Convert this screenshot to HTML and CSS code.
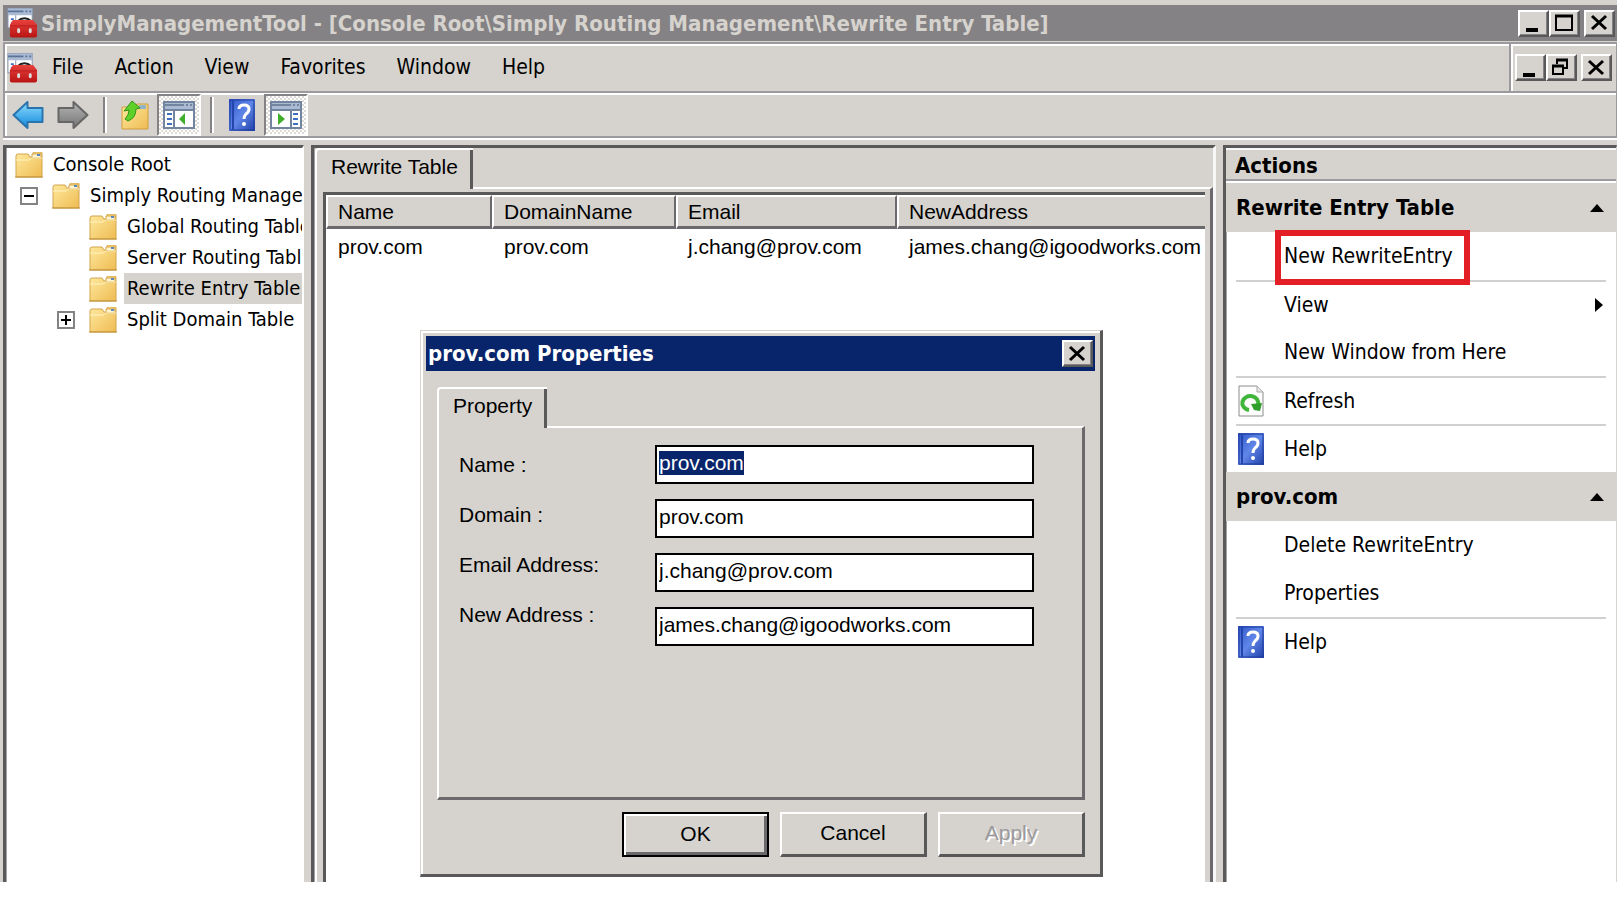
FILE: index.html
```html
<!DOCTYPE html>
<html lang="en">
<head>
    <meta charset="UTF-8">
    <meta name="viewport" content="width=device-width, initial-scale=1.0">
    <title>SimplyManagementTool</title>
    <link rel="stylesheet" href="styles.css">
</head>
<body>
    <!-- Shared icons -->
    <svg class="icon-defs" aria-hidden="true">
        <defs>
            <linearGradient id="folderFill" x1="0" y1="0" x2="1" y2="1">
                <stop offset="0" stop-color="#ffeaa0"/>
                <stop offset="1" stop-color="#eebb52"/>
            </linearGradient>
            <linearGradient id="blueFill" x1="0" y1="0" x2="0" y2="1">
                <stop offset="0" stop-color="#8fe0ff"/>
                <stop offset="1" stop-color="#0f86dc"/>
            </linearGradient>
            <linearGradient id="greyFill" x1="0" y1="0" x2="0" y2="1">
                <stop offset="0" stop-color="#b5b5b5"/>
                <stop offset="1" stop-color="#757575"/>
            </linearGradient>
            <linearGradient id="helpFill" x1="0" y1="0" x2="1" y2="1">
                <stop offset="0" stop-color="#2f55c8"/>
                <stop offset="0.5" stop-color="#5f86e8"/>
                <stop offset="1" stop-color="#1f3fa8"/>
            </linearGradient>
            <linearGradient id="redFill" x1="0" y1="0" x2="0" y2="1">
                <stop offset="0" stop-color="#e8413c"/>
                <stop offset="1" stop-color="#b81414"/>
            </linearGradient>
        </defs>
        <symbol id="toolbox" viewBox="0 0 32 32">
            <rect x="1" y="1" width="25" height="20" fill="#fff" stroke="#8395b0"/>
            <rect x="1" y="1" width="25" height="7" fill="#a9bad2"/>
            <path d="M1 4h16M19 4h2M23 4h2" stroke="#5c7398" stroke-width="2"/>
            <path d="M4 12h3M4 16h3" stroke="#3e6fc4" stroke-width="2"/>
            <path d="M9 8v10" stroke="#8395b0"/>
            <path d="M11 14q3-3 7-3t7 3" fill="none" stroke="#222" stroke-width="2"/>
            <path d="M3 18l3-5h21l4 5v11q0 2-2 2H5q-2 0-2-2z" fill="url(#redFill)"/>
            <path d="M3 19h28" stroke="#b81c1c"/>
            <path d="M12 23v2M24 23v2" stroke="#ddd" stroke-width="3" stroke-linecap="round"/>
        </symbol>
        <symbol id="folder" viewBox="0 0 28 26">
            <path d="M1 4q0-2 2-2h10l2 3h3V1q0-1 1-1h7q1 0 1 1v24H1z" fill="url(#folderFill)" stroke="#d3a44a"/>
            <path d="M17 2h9v4h-9z" fill="#fff6cf" stroke="#d3a44a"/>
            <path d="M22 3h3" stroke="#5b87c0" stroke-width="2"/>
            <path d="M1 8h13l3-2h10" fill="none" stroke="#fff3c0"/>
            <path d="M0 25h28" stroke="#bf8f38"/>
        </symbol>
        <symbol id="back" viewBox="0 0 32 28">
            <path d="M1 14L15 1v6h15v14H15v6z" fill="url(#blueFill)" stroke="#2a74ad" stroke-width="2" stroke-linejoin="round"/>
        </symbol>
        <symbol id="forward" viewBox="0 0 32 28">
            <path d="M31 14L17 1v6H2v14h15v6z" fill="url(#greyFill)" stroke="#666" stroke-width="2" stroke-linejoin="round"/>
        </symbol>
        <symbol id="up" viewBox="0 0 28 30">
            <path d="M1 7h12l3-3h11v25H1z" fill="url(#folderFill)" stroke="#cf9d3c"/>
            <path d="M18 5h7v4h-7z" fill="#8fb4c8"/>
            <path d="M11 1l8 7-4 1q0 9-8 12l-3-2q4-4 4-9l-5 1z" fill="#5fd02a" stroke="#2f9414"/>
        </symbol>
        <symbol id="treeview" viewBox="0 0 32 28">
            <rect x="1" y="1" width="30" height="26" fill="#fff" stroke="#72849f" stroke-width="2"/>
            <path d="M2 5h28" stroke="#a9bad2" stroke-width="6"/>
            <path d="M2 4h19M23 4h2M27 4h2M1 9h30" stroke="#72849f" stroke-width="2"/>
            <path d="M11 9v18" stroke="#72849f" stroke-width="2"/>
            <path d="M4 13h5M4 18h5M4 23h5" stroke="#3e6fc4" stroke-width="2"/>
            <path d="M22 12v12l-6-6z" fill="#3fae2a"/>
        </symbol>
        <symbol id="actionview" viewBox="0 0 32 28">
            <rect x="1" y="1" width="30" height="26" fill="#fff" stroke="#72849f" stroke-width="2"/>
            <path d="M2 5h28" stroke="#a9bad2" stroke-width="6"/>
            <path d="M2 4h19M23 4h2M27 4h2M1 9h30" stroke="#72849f" stroke-width="2"/>
            <path d="M21 9v18" stroke="#72849f" stroke-width="2"/>
            <path d="M23 13h5M23 18h5M23 23h5" stroke="#3e6fc4" stroke-width="2"/>
            <path d="M8 12v12l7-6z" fill="#3fae2a"/>
        </symbol>
        <symbol id="help" viewBox="0 0 26 32">
            <rect x="0" y="0" width="26" height="32" fill="url(#helpFill)"/>
            <path d="M1 1v30h24V1z" fill="none" stroke="#1f3d9c" stroke-width="1"/>
            <path d="M4 1v30" stroke="#2445ab" stroke-width="2"/>
            <path d="M10 10q0-4 5-4 5 0 5 4 0 3-3 5-2 2-2 5" fill="none" stroke="#fff" stroke-width="3"/>
            <circle cx="15" cy="25" r="2" fill="#fff"/>
        </symbol>
        <symbol id="refresh" viewBox="0 0 26 32">
            <path d="M1 1h18l6 6v24H1z" fill="#fcfcfc" stroke="#8c8c8c"/>
            <path d="M19 1v6h6" fill="#e6e6e6" stroke="#a8a8a8"/>
            <path d="M11 25a8 7 0 1 1 9-5" fill="none" stroke="#3fb53a" stroke-width="4"/>
            <path d="M13 19l11-1-2 8-6-1z" fill="#2f9e2c"/>
        </symbol>
        <symbol id="min" viewBox="0 0 26 22"><path d="M6 18h12" stroke="#000" stroke-width="4"/></symbol>
        <symbol id="max" viewBox="0 0 26 22"><path d="M5 4h16v14H5z" fill="none" stroke="#000" stroke-width="2"/><path d="M4 4h18" stroke="#000" stroke-width="3"/></symbol>
        <symbol id="restore" viewBox="0 0 26 22">
            <path d="M9 7V3h10v8h-4" fill="none" stroke="#000" stroke-width="2"/><path d="M8 3h12M4 9h12" stroke="#000" stroke-width="3"/>
            <path d="M5 9h10v8H5z" fill="none" stroke="#000" stroke-width="2"/>
        </symbol>
        <symbol id="close" viewBox="0 0 26 22"><path d="M6 4l14 13M20 4L6 17" stroke="#000" stroke-width="3"/></symbol>
    </svg>

    <div class="window">
        <header class="title-bar">
            <svg class="app-icon"><use href="#toolbox"/></svg>
            <h1>SimplyManagementTool - [Console Root\Simply Routing Management\Rewrite Entry Table]</h1>
            <div class="window-buttons">
                <button class="box-button" aria-label="Minimize"><svg><use href="#min"/></svg></button>
                <button class="box-button" aria-label="Maximize"><svg><use href="#max"/></svg></button>
                <button class="box-button close" aria-label="Close"><svg><use href="#close"/></svg></button>
            </div>
        </header>

        <div class="menu-bar">
            <svg class="app-icon"><use href="#toolbox"/></svg>
            <nav class="menu">
                <button>File</button>
                <button>Action</button>
                <button>View</button>
                <button>Favorites</button>
                <button>Window</button>
                <button>Help</button>
            </nav>
            <div class="window-buttons child">
                <button class="box-button" aria-label="Minimize child"><svg><use href="#min"/></svg></button>
                <button class="box-button" aria-label="Restore child"><svg><use href="#restore"/></svg></button>
                <button class="box-button close" aria-label="Close child"><svg><use href="#close"/></svg></button>
            </div>
        </div>

        <div class="toolbar">
            <button class="tool" aria-label="Back"><svg class="arrow"><use href="#back"/></svg></button>
            <button class="tool" aria-label="Forward"><svg class="arrow"><use href="#forward"/></svg></button>
            <span class="divider"></span>
            <button class="tool" aria-label="Up one level"><svg class="up"><use href="#up"/></svg></button>
            <button class="tool pressed" aria-label="Show console tree"><svg class="view"><use href="#treeview"/></svg></button>
            <span class="divider"></span>
            <button class="tool" aria-label="Help"><svg class="book"><use href="#help"/></svg></button>
            <button class="tool pressed" aria-label="Show action pane"><svg class="view"><use href="#actionview"/></svg></button>
        </div>

        <main class="workspace">
            <!-- Console tree -->
            <ul class="pane tree">
                <li><svg class="folder"><use href="#folder"/></svg><span class="label">Console Root</span></li>
                <li class="level-1"><button class="expander" aria-label="Collapse"></button><svg class="folder"><use href="#folder"/></svg><span class="label">Simply Routing Management</span></li>
                <li class="level-2"><svg class="folder"><use href="#folder"/></svg><span class="label">Global Routing Table</span></li>
                <li class="level-2"><svg class="folder"><use href="#folder"/></svg><span class="label">Server Routing Table</span></li>
                <li class="level-2"><svg class="folder"><use href="#folder"/></svg><span class="label selected">Rewrite Entry Table</span></li>
                <li class="level-2"><button class="expander plus" aria-label="Expand"></button><svg class="folder"><use href="#folder"/></svg><span class="label">Split Domain Table</span></li>
            </ul>

            <!-- Rewrite table -->
            <section class="pane content">
                <button class="tab">Rewrite Table</button>
                <div class="tab-panel">
                    <div class="list">
                        <table>
                            <colgroup><col class="col-name"><col class="col-domain"><col class="col-email"><col></colgroup>
                            <thead>
                                <tr><th>Name</th><th>DomainName</th><th>Email</th><th>NewAddress</th></tr>
                            </thead>
                            <tbody>
                                <tr><td>prov.com</td><td>prov.com</td><td>j.chang@prov.com</td><td>james.chang@igoodworks.com</td></tr>
                            </tbody>
                        </table>
                    </div>
                </div>
            </section>

            <!-- Actions -->
            <aside class="pane actions">
                <h2>Actions</h2>
                <h3>Rewrite Entry Table <span class="arrow-up"></span></h3>
                <button class="action"><span class="marked">New RewriteEntry</span></button>
                <button class="action line">View <span class="arrow-right"></span></button>
                <button class="action">New Window from Here</button>
                <button class="action line"><svg><use href="#refresh"/></svg>Refresh</button>
                <button class="action line"><svg><use href="#help"/></svg>Help</button>
                <h3>prov.com <span class="arrow-up"></span></h3>
                <button class="action">Delete RewriteEntry</button>
                <button class="action">Properties</button>
                <button class="action line"><svg><use href="#help"/></svg>Help</button>
            </aside>
        </main>

        <!-- Properties dialog -->
        <form class="dialog" role="dialog" aria-labelledby="dialogTitle">
            <div class="dialog-title">
                <h2 id="dialogTitle">prov.com Properties</h2>
                <button type="button" class="box-button" aria-label="Close dialog"><svg><use href="#close"/></svg></button>
            </div>
            <div class="dialog-body">
                <button type="button" class="tab">Property</button>
                <div class="tab-panel fields">
                    <div class="labels">
                        <label for="name">Name :</label>
                        <label for="domain">Domain :</label>
                        <label for="email">Email Address:</label>
                        <label for="newAddress">New Address :</label>
                    </div>
                    <div class="inputs">
                        <input type="text" id="name" value="prov.com">
                        <input type="text" id="domain" value="prov.com">
                        <input type="text" id="email" value="j.chang@prov.com">
                        <input type="text" id="newAddress" value="james.chang@igoodworks.com">
                    </div>
                </div>
                <div class="dialog-buttons">
                    <button type="button" class="push default">OK</button>
                    <button type="button" class="push">Cancel</button>
                    <button type="button" class="push" disabled>Apply</button>
                </div>
            </div>
        </form>
    </div>

    <script>
        // Dialog opens with the name selected
        const nameInput = document.getElementById("name");
        nameInput.focus();
        nameInput.select();
    </script>
</body>
</html>
```
FILE: styles.css
```css
*, *::after {
    box-sizing: border-box;
}

body {
    margin: 0;
    background: #fff;
    color: #000;
    font-family: "DejaVu Sans Condensed", "DejaVu Sans", sans-serif;
    font-size: 21px;
    line-height: 31px;
}

h1, h2, h3, ul {
    margin: 0;
    padding: 0;
}

h1, h2, h3 {
    font-size: 22px;
}

button {
    padding: 0;
    border: none;
    background: none;
    color: inherit;
    font: inherit;
}

svg {
    display: block;
    flex: none;
}

.icon-defs {
    position: absolute;
    width: 0;
    height: 0;
}

.window {
    position: relative;
    display: flex;
    flex-direction: column;
    height: calc(100vh - 18px);
    min-height: 700px;
    margin-right: 7px;
    padding: 5px 0 0 3px;
    background: #d6d3ce;
    overflow: hidden;
}

/* Title bar */
.title-bar {
    display: flex;
    align-items: center;
    height: 36px;
    padding-left: 4px;
    background: #848284;
    color: #d6d3ce;
}

.title-bar h1 {
    flex: 1;
    padding-left: 3px;
    white-space: nowrap;
}

.app-icon {
    width: 31px;
    height: 32px;
}

.window-buttons {
    display: flex;
    padding-right: 2px;
}

.box-button {
    width: 31px;
    height: 27px;
    border: 2px solid;
    border-color: #fff #5a595a #5a595a #fff;
    background: #d6d3ce;
    box-shadow: inset -1px -1px #848284;
}

.box-button svg {
    width: 26px;
    height: 22px;
}

.window-buttons .close {
    margin-left: 4px;
}

/* Menu */
.menu-bar {
    display: flex;
    align-items: center;
    height: 51px;
    margin-top: 1px;
    padding-left: 2px;
    border: solid #9c9a9c;
    border-width: 2px 1px 2px 2px;
    box-shadow: inset 0 2px #fff, inset 2px 0 #fff;
}

.menu {
    display: flex;
    flex: 1;
    gap: 31px;
    padding-left: 14px;
}

.window-buttons.child {
    align-items: center;
    align-self: stretch;
    padding: 0 4px;
    border-left: 2px solid #9c9a9c;
    box-shadow: inset 2px 0 #fff;
}

/* Toolbar */
.toolbar {
    display: flex;
    align-items: center;
    height: 45px;
    padding-left: 1px;
    border: solid #9c9a9c;
    border-width: 0 1px 2px 2px;
    box-shadow: inset 0 2px #fff, inset 2px 0 #fff, 0 2px #fff;
}

.tool {
    display: flex;
    align-items: center;
    justify-content: center;
    width: 44px;
    height: 42px;
}

.tool.pressed {
    border: 2px solid;
    border-color: #848284 #fff #fff #848284;
    background: repeating-conic-gradient(#fff 0 25%, #dedbd6 0 50%) 0 0 / 4px 4px;
}

.arrow {
    width: 33px;
    height: 28px;
}

.up {
    width: 28px;
    height: 30px;
}

.view {
    width: 32px;
    height: 28px;
}

.book {
    width: 26px;
    height: 32px;
}

.divider {
    width: 4px;
    height: 36px;
    margin: 0 6px 0 9px;
    border-left: 2px solid #848284;
    border-right: 2px solid #fff;
}

/* Panes */
.workspace {
    display: grid;
    grid-template-columns: 301px 1fr 394px;
    gap: 7px;
    flex: 1;
    min-height: 0;
    margin-top: 7px;
}

.pane {
    min-width: 0;
    border: solid #5a595a;
    border-width: 3px 0 0 3px;
    box-shadow: inset 1px 0 #a5a2a5;
    overflow: hidden;
}

.tree {
    padding: 1px 0 0 1px;
    border-right: 2px solid #fff;
    background: #fff;
    list-style: none;
    font-size: 20px;
}

.tree li {
    display: flex;
    align-items: center;
    height: 31px;
    padding-left: 8px;
    white-space: nowrap;
    overflow: hidden;
}

.tree .level-1 {
    padding-left: 45px;
}

.tree .level-2 {
    padding-left: 82px;
}

.folder {
    width: 28px;
    height: 26px;
}

.label {
    margin-left: 7px;
    padding: 0 3px;
}

.label.selected {
    background: #d6d3ce;
}

.expander {
    flex: none;
    width: 18px;
    height: 18px;
    margin: 0 14px 0 -32px;
    border: 2px solid #848284;
    background: linear-gradient(#000, #000) center / 10px 2px no-repeat;
}

.expander.plus {
    background: linear-gradient(#000, #000) center / 10px 2px no-repeat, linear-gradient(#000, #000) center / 2px 10px no-repeat;
}

/* Tabs */
.content {
    display: flex;
    flex-direction: column;
    padding-left: 1px;
    border-right: 3px solid #f7f7f7;
    font-family: "Liberation Sans", Arial, sans-serif;
}

.tab {
    position: relative;
    z-index: 1;
    align-self: flex-start;
    height: 41px;
    margin-bottom: -2px;
    padding: 0 15px 6px 14px;
    border: solid #fff;
    border-width: 2px 0 0 2px;
    border-radius: 4px 0 0 0;
    background: #d6d3ce;
    box-shadow: inset -3px 0 #5a595a;
    font-family: "Liberation Sans", Arial, sans-serif;
}

.tab-panel {
    flex: 1;
    border: solid;
    border-width: 2px 3px 3px 2px;
    border-color: #fff #6b696b #6b696b #fff;
}

.content .tab-panel {
    border-bottom: none;
    padding: 3px 5px 0 6px;
}

.list {
    height: 100%;
    border: solid #5a595a;
    border-width: 3px 0 0 3px;
    background: #fff;
    overflow: hidden;
}

/* Table */
table {
    width: 100%;
    border-collapse: separate;
    border-spacing: 0;
    table-layout: fixed;
}

.col-name {
    width: 166px;
}

.col-domain {
    width: 184px;
}

.col-email {
    width: 221px;
}

th, td {
    padding: 0 0 0 12px;
    font-weight: normal;
    text-align: left;
    white-space: nowrap;
}

th {
    height: 34px;
    padding-left: 10px;
    border: solid;
    border-width: 2px 2px 3px 2px;
    border-color: #fff #6b696b #6b696b #fff;
    background: #d6d3ce;
    line-height: 28px;
}

th:last-child {
    border-right: none;
}

td {
    height: 34px;
}

/* Actions */
.actions {
    border-right: 1px solid #d6d3ce;
    background: #fff;
}

.actions h2 {
    height: 35px;
    padding-left: 9px;
    border-bottom: 2px solid #fff;
    background: #d6d3ce;
    box-shadow: inset 0 2px #f7f7f7, inset 0 -2px #9c9a9c;
    line-height: 35px;
}

.actions h3 {
    display: flex;
    align-items: center;
    justify-content: space-between;
    height: 49px;
    padding: 0 12px 0 10px;
    background: #d6d3ce;
}

.action {
    position: relative;
    display: flex;
    align-items: center;
    width: 370px;
    height: 48px;
    margin-left: 10px;
    padding-left: 48px;
    text-align: left;
}

.action.line {
    border-top: 2px solid #d0d0d0;
}

.action svg {
    width: 26px;
    height: 32px;
    margin: 0 20px 0 -46px;
}

.arrow-up {
    border: solid transparent;
    border-width: 0 7px 8px;
    border-bottom-color: #000;
}

.arrow-right {
    margin: 0 3px 0 auto;
    border: solid transparent;
    border-width: 7px 0 7px 8px;
    border-left-color: #000;
}

/* Red frame over the entry */
.marked::after {
    content: "";
    position: absolute;
    z-index: 1;
    top: -2px;
    left: 39px;
    width: 195px;
    height: 55px;
    border: 6px solid #e31e26;
}

/* Dialog */
.dialog {
    position: absolute;
    top: 330px;
    left: 420px;
    width: 683px;
    padding: 5px;
    border: solid;
    border-width: 1px 3px 3px 1px;
    border-color: #d6d3ce #5a595a #5a595a #d6d3ce;
    background: #d6d3ce;
    box-shadow: inset 2px 2px #fff;
    font-family: "Liberation Sans", Arial, sans-serif;
}

.dialog-title {
    display: flex;
    align-items: center;
    justify-content: space-between;
    height: 35px;
    padding: 0 2px;
    background: #08246b;
    color: #fff;
    font-family: "DejaVu Sans Condensed", "DejaVu Sans", sans-serif;
}

.dialog-body {
    display: flex;
    flex-direction: column;
    padding: 16px 10px 12px 11px;
}

.fields {
    display: flex;
    gap: 30px;
    height: 374px;
    flex: none;
    padding: 17px 48px 0 20px;
}

.labels {
    display: flex;
    flex-direction: column;
    gap: 10px;
    width: 166px;
    line-height: 40px;
}

.inputs {
    display: flex;
    flex: 1;
    flex-direction: column;
    gap: 15px;
}

input {
    width: 100%;
    height: 39px;
    padding: 0 2px 3px;
    border: 2px solid #000;
    border-radius: 0;
    outline: none;
    background: #fff;
    font-family: "Liberation Sans", Arial, sans-serif;
    font-size: 21px;
}

input::selection {
    background: #08246b;
    color: #fff;
}

.dialog-buttons {
    display: flex;
    justify-content: flex-end;
    gap: 11px;
    padding-top: 12px;
}

.push {
    width: 147px;
    height: 45px;
    padding-bottom: 3px;
    border: solid;
    border-width: 2px 3px 3px 2px;
    border-color: #fff #5a595a #5a595a #fff;
}

.push.default {
    border: 2px solid #000;
    box-shadow: inset 2px 2px #fff, inset -3px -3px #6b696b;
}

.push:disabled {
    color: #9c9a9c;
    text-shadow: 2px 2px #fff;
}
```
